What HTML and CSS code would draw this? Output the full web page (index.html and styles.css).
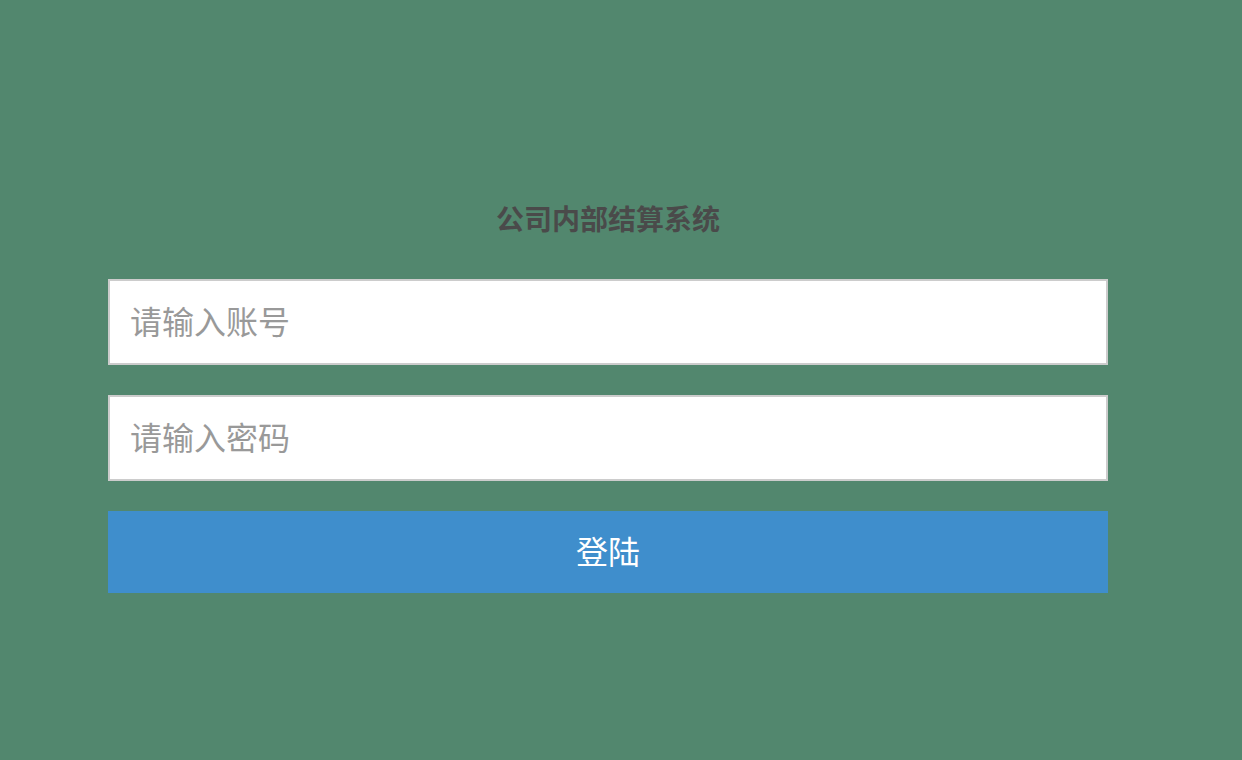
FILE: index.html
```html
<!DOCTYPE html>
<html lang="zh">
<head>
<meta charset="utf-8">
<title>公司内部结算系统</title>
<link rel="stylesheet" href="styles.css">
</head>
<body>
<main class="page">
  <form class="login">
    <h1 class="title">公司内部结算系统</h1>
    <input class="field" type="text" placeholder="请输入账号">
    <input class="field" type="password" placeholder="请输入密码">
    <button class="submit" type="button">登陆</button>
  </form>
</main>
</body>
</html>
```
FILE: styles.css
```css
html, body {
  margin: 0;
  padding: 0;
  height: 100%;
}
body {
  background: #52876e;
  font-family: "Noto Sans CJK SC", "Noto Sans", sans-serif;
}
.page {
  padding: 199px 0 0 108px;
}
.login {
  width: 1000px;
  display: flex;
  flex-direction: column;
  gap: 30px;
  margin: 0;
}
.title {
  margin: 0 0 12px 0;
  text-align: center;
  font-size: 28px;
  line-height: 38px;
  font-weight: 700;
  color: #4a4a4a;
}
.field {
  box-sizing: border-box;
  width: 1000px;
  height: 86px;
  border: 2px solid #cccccc;
  background: #fff;
  padding: 0 20px 4px 20px;
  font-family: inherit;
  font-size: 32px;
  color: #333;
  outline: none;
  margin: 0;
}
.field::placeholder {
  color: #999999;
}
.submit {
  box-sizing: border-box;
  width: 1000px;
  height: 82px;
  border: none;
  background: #3f8ecc;
  color: #ffffff;
  font-family: inherit;
  font-size: 32px;
  margin: 0;
  padding: 0 0 4px 0;
}
```
